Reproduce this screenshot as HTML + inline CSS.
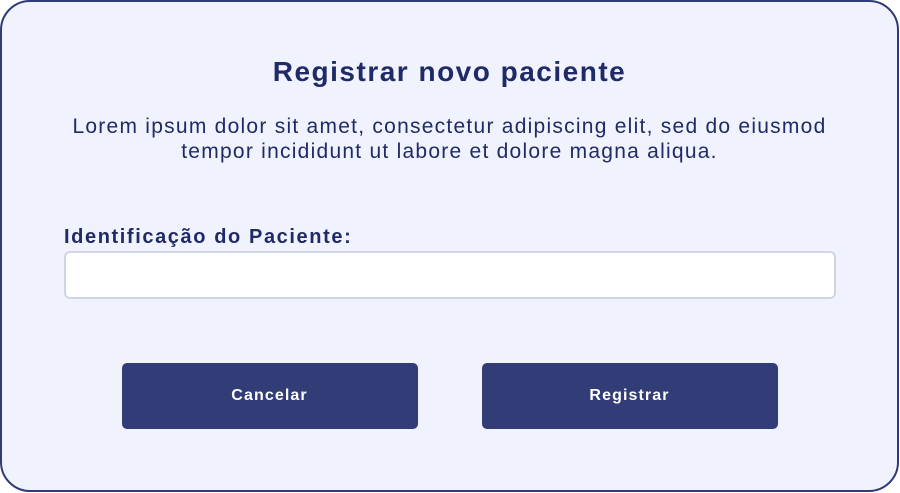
<!DOCTYPE html>
<html><head><meta charset="utf-8"><style>
html,body{margin:0;padding:0;width:900px;height:493px;background:#fff;overflow:hidden;font-family:"Liberation Sans",Arial,sans-serif}
.card{position:absolute;left:0;top:0;width:895px;height:488px;border:2.5px solid #303a78;border-radius:30px;background:#f0f3fe}
h1{position:absolute;left:0;right:0;top:54px;margin:0;text-align:center;font-size:28px;letter-spacing:1.5px;font-weight:bold;color:#1f2a66;line-height:32px}
p{position:absolute;left:0;right:0;top:112px;margin:0;text-align:center;font-size:21px;letter-spacing:1.25px;line-height:25px;color:#1f2a66}
.lbl{position:absolute;left:62px;top:222px;font-size:20px;letter-spacing:1.6px;font-weight:bold;color:#1f2a66;line-height:26px}
.inp{position:absolute;left:62px;top:249px;width:768px;height:44px;border:2px solid #cfd5e3;border-radius:6px;background:#fff}
.btn{position:absolute;top:361px;width:296px;height:66px;border-radius:5px;background:#323d78;color:#fff;font-weight:bold;font-size:16px;letter-spacing:1.1px;line-height:66px;text-align:center}
</style></head><body>
<div class="card">
<h1>Registrar novo paciente</h1>
<p>Lorem ipsum dolor sit amet, consectetur adipiscing elit, sed do eiusmod<br>tempor incididunt ut labore et dolore magna aliqua.</p>
<div class="lbl">Identificação do Paciente:</div>
<div class="inp"></div>
<div class="btn" style="left:119.5px">Cancelar</div>
<div class="btn" style="left:479.5px">Registrar</div>
</div>
</body></html>
